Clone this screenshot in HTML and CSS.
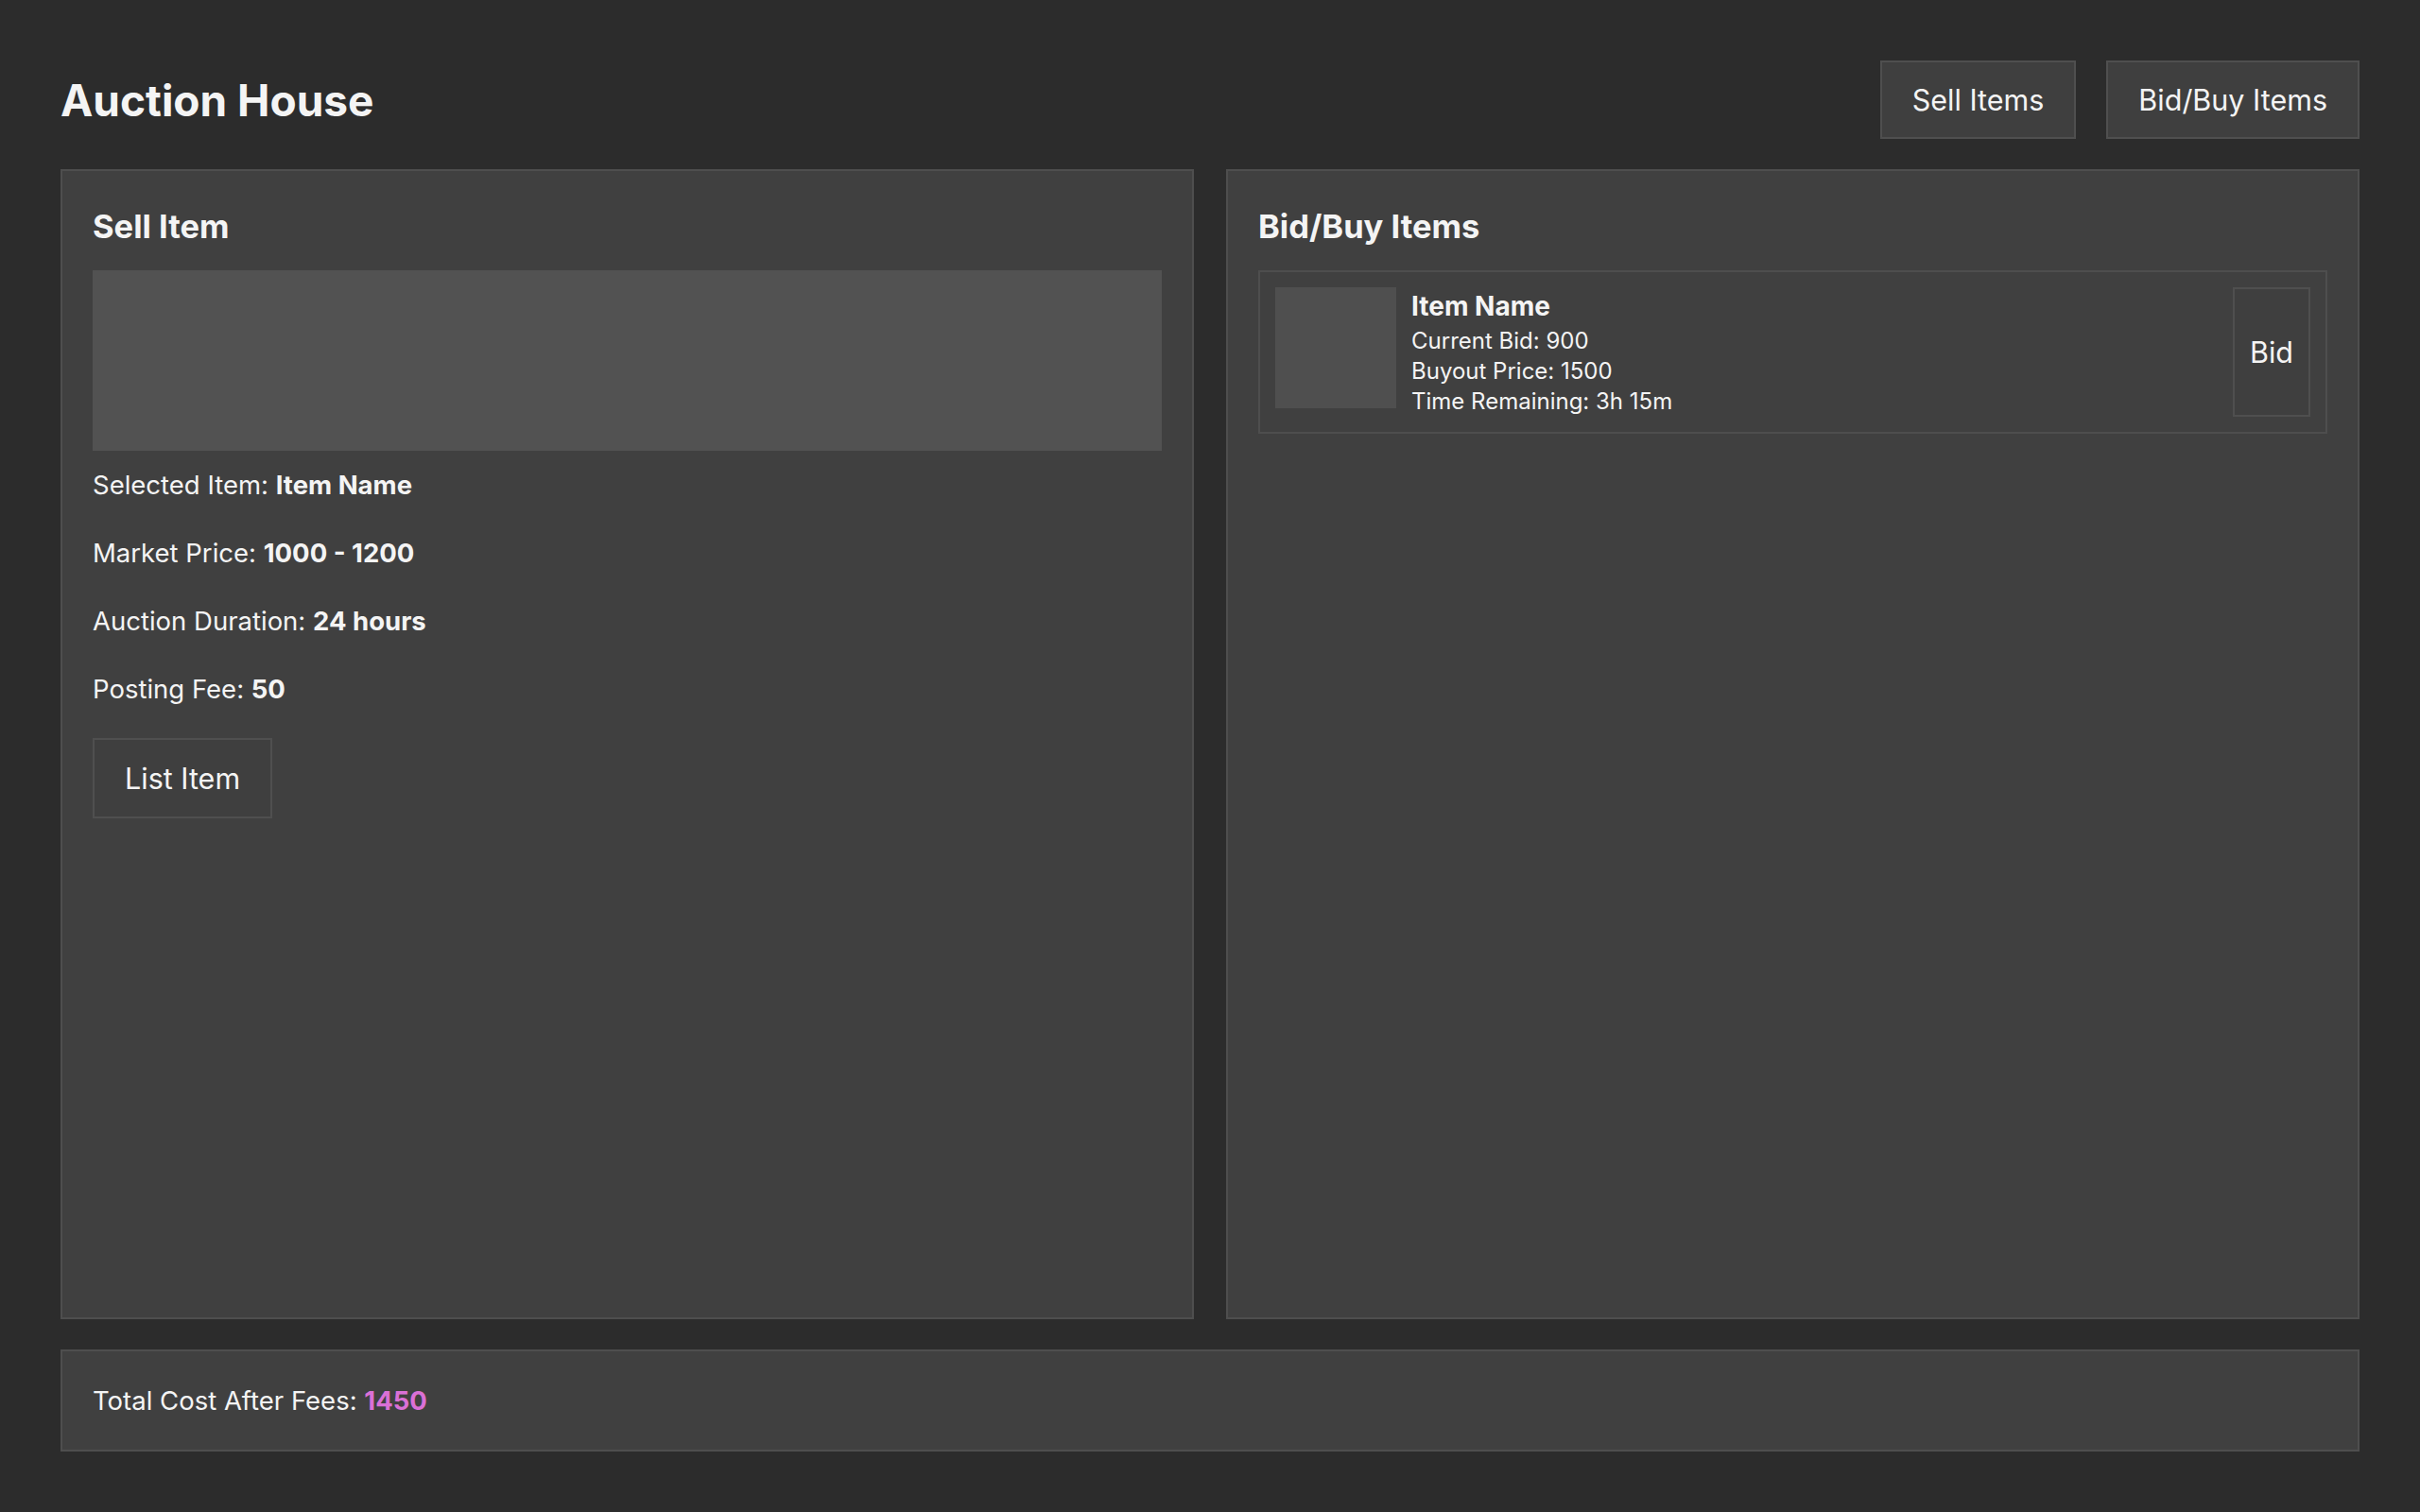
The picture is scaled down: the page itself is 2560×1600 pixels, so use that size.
FILE: index.html
```html
<!DOCTYPE html>
<html>
<head>
    <title>Auction House</title>
    <link rel="stylesheet" href="styles.css">
</head>
<body>
    <div class="app">
        <header class="top-bar">
            <h1>Auction House</h1>
            <nav class="tabs">
                <button class="btn">Sell Items</button>
                <button class="btn">Bid/Buy Items</button>
            </nav>
        </header>

        <main class="panels">
            <section class="panel">
                <h2>Sell Item</h2>
                <div class="item-slot"></div>
                <p>Selected Item: <strong>Item Name</strong></p>
                <p>Market Price: <strong>1000 - 1200</strong></p>
                <p>Auction Duration: <strong>24 hours</strong></p>
                <p>Posting Fee: <strong>50</strong></p>
                <button class="btn list-btn">List Item</button>
            </section>

            <section class="panel">
                <h2>Bid/Buy Items</h2>
                <div class="listing">
                    <div class="listing-image"></div>
                    <div class="listing-info">
                        <div class="listing-name">Item Name</div>
                        <div>Current Bid: 900</div>
                        <div>Buyout Price: 1500</div>
                        <div>Time Remaining: 3h 15m</div>
                    </div>
                    <button class="btn bid-btn">Bid</button>
                </div>
            </section>
        </main>

        <footer class="summary">
            Total Cost After Fees: <span class="total">1450</span>
        </footer>
    </div>
</body>
</html>
```

FILE: styles.css
```css
html, body {
    margin: 0;
    padding: 0;
    height: 100%;
}

body {
    background-color: #2c2c2c;
    color: #f4f4f4;
    font-family: Inter, "Noto Sans", sans-serif;
    font-size: 27.5px;
}

.app {
    box-sizing: border-box;
    height: 100vh;
    padding: 64px;
    display: flex;
    flex-direction: column;
    gap: 32px;
}

.top-bar {
    display: flex;
    justify-content: space-between;
    align-items: center;
}

.top-bar h1 {
    margin: 0;
    font-size: 46px;
    font-weight: 700;
}

.tabs {
    display: flex;
    gap: 32px;
}

.btn {
    font-family: Inter, "Noto Sans", sans-serif;
    font-size: 30.5px;
    line-height: 39px;
    color: #f4f4f4;
    background-color: #3f3f3f;
    border: 2px solid #4f4f4f;
    padding: 20px 32px;
    cursor: pointer;
}

.panels {
    flex: 1;
    display: grid;
    grid-template-columns: 1fr 1fr;
    gap: 34px;
}

.panel {
    background-color: #404040;
    border: 2px solid #4e4e4e;
    padding: 32px;
}

.panel h2 {
    margin: 0 0 20px;
    font-size: 34.5px;
    line-height: 53px;
    font-weight: 700;
}

.item-slot {
    height: 191px;
    background-color: #525252;
    margin-bottom: 20px;
}

.panel p {
    margin: 0 0 40px;
    line-height: 32px;
}

.panel p:last-of-type {
    margin-bottom: 36px;
}

.list-btn {
    line-height: 41px;
}

.listing {
    display: flex;
    gap: 16px;
    border: 2px solid #4e4e4e;
    padding: 16px;
    font-size: 24px;
    line-height: 32px;
}

.listing-image {
    width: 128px;
    height: 128px;
    background-color: #4f4f4f;
}

.listing-name {
    font-size: 28px;
    font-weight: 700;
    line-height: 41px;
}

.listing-info {
    flex: 1;
}

.bid-btn {
    padding: 0 16px;
}

.summary {
    background-color: #404040;
    border: 2px solid #4e4e4e;
    padding: 32px;
    line-height: 40px;
}

.total {
    color: #da70d6;
    font-weight: 700;
}
```
